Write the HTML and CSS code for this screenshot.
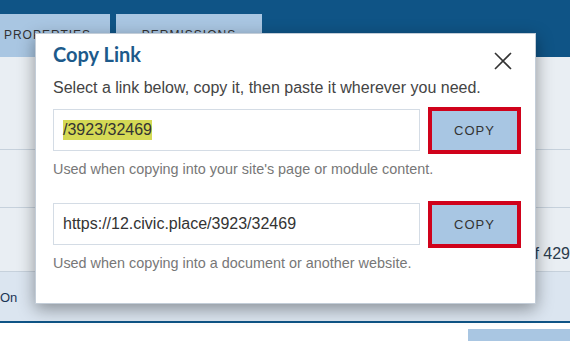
FILE: index.html
```html
<!DOCTYPE html>
<html lang="en">
<head>
    <meta charset="UTF-8">
    <meta name="viewport" content="width=device-width, initial-scale=1.0">
    <title>Copy Link</title>
    <link rel="stylesheet" href="styles.css">
</head>
<body>
    <header class="topbar">
        <nav class="tabs">
            <div class="tab tab-first">PROPERTIES</div>
            <div class="tab">PERMISSIONS</div>
        </nav>
    </header>

    <main class="list">
        <div class="list-row row-first"></div>
        <div class="list-row row-second"></div>
        <div class="list-row row-count"><span>1 - 20 of 429</span></div>
        <div class="list-footer"><span class="footer-label">On</span></div>
        <div class="actions"><button class="action-btn"></button></div>
    </main>

    <div class="modal">
        <div class="modal-head">
            <h2>Copy Link</h2>
            <button class="close-btn" aria-label="Close">
                <svg width="18" height="18" viewBox="0 0 18 18">
                    <path d="M1 1 L17 17 M17 1 L1 17" stroke="#333" stroke-width="1.6" fill="none"/>
                </svg>
            </button>
        </div>
        <p class="intro">Select a link below, copy it, then paste it wherever you need.</p>

        <div class="link-group">
            <div class="link-row">
                <div class="link-field"><span class="selected">/3923/32469</span></div>
                <button class="copy-btn">COPY</button>
            </div>
            <p class="hint">Used when copying into your site's page or module content.</p>
        </div>

        <div class="link-group">
            <div class="link-row">
                <div class="link-field">https://12.civic.place/3923/32469</div>
                <button class="copy-btn">COPY</button>
            </div>
            <p class="hint">Used when copying into a document or another website.</p>
        </div>
    </div>
</body>
</html>
```

FILE: styles.css
```css
* {
    box-sizing: border-box;
}

body {
    margin: 0;
    font-family: "Liberation Sans", Arial, sans-serif;
    background: #fff;
    color: #333;
    overflow: hidden;
}

/* page behind the dialog */
.topbar {
    height: 57px;
    background: #0f5486;
    padding-top: 14px;
}

.tabs {
    display: flex;
    gap: 6px;
}

.tab {
    height: 43px;
    background: #a9c6e2;
    padding-top: 13px;
    font-size: 12px;
    line-height: 16px;
    letter-spacing: 1px;
    color: #333;
    text-align: center;
    width: 146px;
}

.tab-first {
    width: 125px;
    margin-left: -15px;
}

.list {
    background: #e9eef3;
}

.list-row {
    border-bottom: 1px solid #c6d1dc;
}

.row-first {
    height: 93px;
}

.row-second {
    height: 58px;
}

.row-count {
    height: 64px;
    display: flex;
    justify-content: flex-end;
    padding-top: 36px;
    font-size: 16px;
    line-height: 20px;
    color: #2b3b4c;
    white-space: nowrap;
}

.list-footer {
    height: 51px;
    background: #dbe5f0;
    border-bottom: 2px solid #0f5486;
    padding-top: 18px;
    font-size: 13px;
    line-height: 16px;
    color: #1b3555;
}

.actions {
    background: #fff;
    height: 18px;
    padding-top: 6px;
    display: flex;
    justify-content: flex-end;
}

.action-btn {
    width: 102px;
    height: 12px;
    border: 0;
    background: #a9c6e2;
}

/* dialog */
.modal {
    position: absolute;
    left: 35px;
    top: 33px;
    width: 501px;
    background: #fff;
    border: 1px solid #c3cdd8;
    padding: 6px 14px 30px 17px;
    box-shadow: 0 5px 16px rgba(0, 0, 0, 0.38);
}

.modal-head {
    display: flex;
    justify-content: space-between;
    align-items: flex-start;
}

.modal-head h2 {
    margin: 0;
    font-family: Lato, "Liberation Sans", sans-serif;
    font-weight: 700;
    font-size: 20px;
    line-height: 28px;
    color: #1d5a8b;
}

.close-btn {
    width: 18px;
    height: 18px;
    padding: 0;
    margin: 12px 9px 0 0;
    border: 0;
    background: none;
    cursor: pointer;
}

.close-btn svg {
    display: block;
}

.intro {
    margin: 8px 0 0;
    font-size: 16px;
    line-height: 20px;
    color: #444;
}

.link-group {
    margin-top: 11px;
}

.link-group + .link-group {
    margin-top: 24px;
}

.link-row {
    display: flex;
    align-items: flex-start;
}

.link-field {
    flex: 1;
    height: 42px;
    border: 1px solid #d4dce5;
    padding: 0 9px;
    display: flex;
    align-items: center;
    font-size: 16px;
    color: #333;
    white-space: nowrap;
    overflow: hidden;
}

.selected {
    background: #d5d955;
    padding: 1px 0;
}

.copy-btn {
    width: 93px;
    height: 47px;
    margin: -2px 0 -3px 8px;
    border: 4px solid #d0021b;
    background: #a8c6e3;
    font-family: "Liberation Sans", Arial, sans-serif;
    font-size: 13px;
    letter-spacing: 1px;
    color: #333;
    cursor: pointer;
}

.hint {
    margin: 8px 0 0;
    font-size: 0.9em;
    line-height: 20px;
    color: #777;
}
```
